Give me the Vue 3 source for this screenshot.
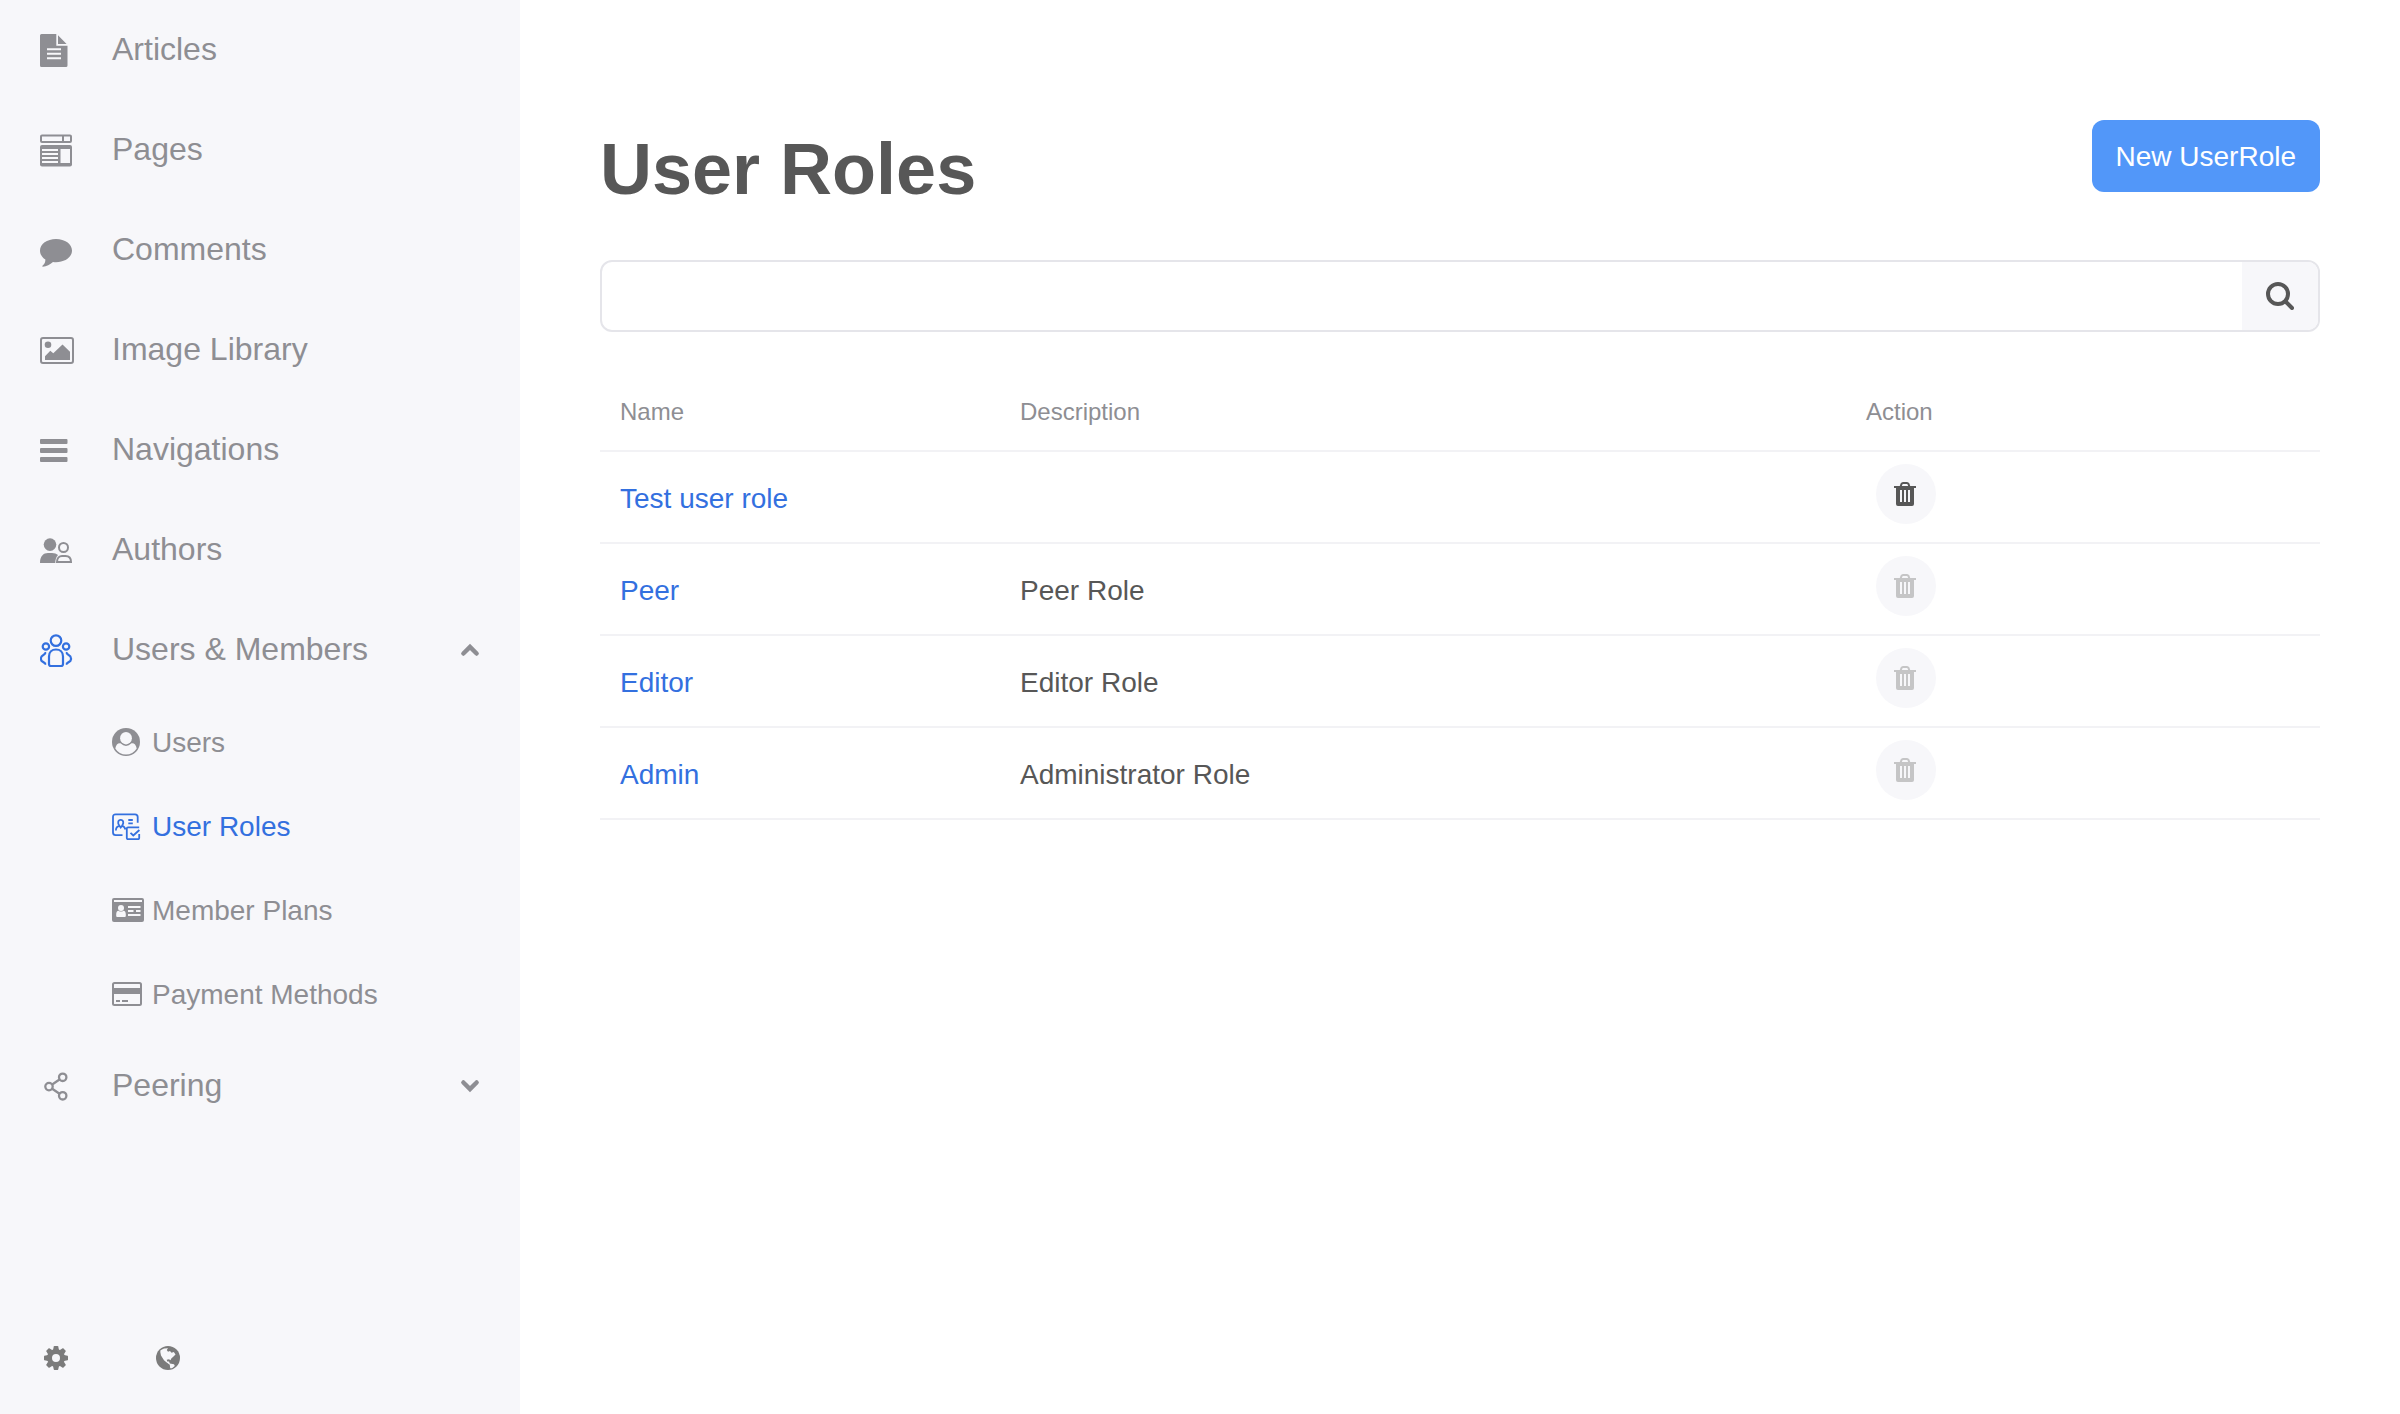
<script setup>
import { h, ref } from 'vue'

const bg = '#f7f7fa'

// Inner markup of every icon, drawn in its own pixel grid
const icons = {
  articles: {
    w: 36, h: 36,
    body: `<path fill="currentColor" d="M1.500 2H16.300V13.700H27.500V33.500Q27.500 35 26 35H1.500Q0 35 0 33.500V3.500Q0 2 1.500 2zM18 3.200L26.600 11.900H18z"/>
      <path stroke="${bg}" stroke-width="2" d="M7 17.300H21M7 21.800H21M7 26.300H21"/>`
  },
  pages: {
    w: 36, h: 36,
    body: `<rect x="1" y="3.500" width="30" height="6.500" rx="1" fill="none" stroke="currentColor" stroke-width="2"/>
      <path stroke="currentColor" stroke-width="2" d="M23 3V11"/>
      <rect y="13" width="32" height="21.500" rx="2" fill="currentColor"/>
      <path stroke="${bg}" stroke-width="2" d="M2 18H18M2 22H18M2 26H18M2 30H18"/>
      <path fill="${bg}" d="M20.500 17H30V31H20.500z"/>`
  },
  comments: {
    w: 36, h: 36,
    body: `<path fill="currentColor" d="M16 7C25 7 32 12 32 18.500S25 30.200 16 30.200C15 30.200 14 30.200 13 30C10 32.500 6.500 34.500 2.800 34.700C2 34.500 2.200 33.800 3 33.200C4.800 31.600 5.300 30 5.400 27.500C2 25.500 0 22.200 0 18.500C0 12 7 7 16 7z"/>`
  },
  images: {
    w: 36, h: 36,
    body: `<rect x="1" y="6" width="32" height="25" rx="2" fill="none" stroke="currentColor" stroke-width="2"/>
      <circle cx="8" cy="12.800" r="3.300" fill="currentColor"/>
      <path fill="currentColor" d="M5 28V24.200L10.300 18.700L13.300 21.300L22.500 12.500L30 19.700V28z"/>`
  },
  navigations: {
    w: 36, h: 36,
    body: `<path fill="currentColor" d="M1 7H26.500Q27.500 7 27.500 8V11Q27.500 12 26.500 12H1Q0 12 0 11V8Q0 7 1 7zM1 16H26.500Q27.500 16 27.500 17V20Q27.500 21 26.500 21H1Q0 21 0 20V17Q0 16 1 16zM1 25H26.500Q27.500 25 27.500 26V29Q27.500 30 26.500 30H1Q0 30 0 29V26Q0 25 1 25z"/>`
  },
  authors: {
    w: 36, h: 36,
    body: `<circle cx="10" cy="12.600" r="6.300" fill="currentColor"/>
      <path fill="currentColor" d="M0 31C0 24 3.500 21 8 21H12C14.500 21 16.500 21.700 18 23C16 25 15.300 28 15.300 31z"/>
      <circle cx="23.500" cy="15.500" r="4.500" fill="none" stroke="currentColor" stroke-width="2"/>
      <path fill="none" stroke="currentColor" stroke-width="2" d="M17 30.100C17 26 19.500 24 22 24H25.500C28.500 24 31 26 31 30.100z"/>`
  },
  members: {
    w: 36, h: 36,
    body: `<g fill="none" stroke="currentColor" stroke-width="2.200">
      <circle cx="16" cy="8.600" r="5.300"/><circle cx="5.900" cy="14.500" r="3.200"/><circle cx="26.100" cy="14.500" r="3.200"/>
      <path d="M9 32V24.500C9 20 12 17.500 16 17.500S23 20 23 24.500V32Q23 34 21 34H11Q9 34 9 32z"/>
      <path d="M6.200 20.800C5.200 20.800 4.800 21.300 4.500 22.200L1.600 24.500C.700 26 .700 27.500 1.600 29L4.300 30.800C4.600 31.500 5.200 31.800 6.200 31.800"/>
      <path d="M25.800 20.800C26.800 20.800 27.200 21.300 27.500 22.200L30.400 24.500C31.300 26 31.300 27.500 30.400 29L27.700 30.800C27.400 31.500 26.800 31.800 25.800 31.800"/></g>`
  },
  peering: {
    w: 36, h: 36,
    body: `<g fill="none" stroke="currentColor" stroke-width="2.300">
      <circle cx="22.700" cy="9.300" r="3.700"/><circle cx="9" cy="18.600" r="3.700"/><circle cx="22.700" cy="27.800" r="3.700"/>
      <path d="M12.200 16.500L19.500 11.500M12.200 20.700L19.500 25.700"/></g>`
  },
  user: {
    w: 32, h: 28,
    body: `<circle cx="14" cy="14" r="14" fill="currentColor"/>
      <path fill="${bg}" d="M3.300 20.500C4 16.500 6 14.800 8.500 15.300Q14 20.500 19.500 15.300C22 14.800 24 16.500 24.700 20.500A12.500 12.500 0 0 1 3.300 20.500z"/>
      <ellipse cx="14" cy="10.200" rx="5.900" ry="6.200" fill="${bg}"/>`
  },
  roles: {
    w: 32, h: 28,
    body: `<g fill="none" stroke="currentColor" stroke-width="1.800">
      <path d="M25.700 10.800V5Q25.700 2.300 23 2.300H3.700Q1 2.300 1 5V20.500Q1 23.200 3.700 23.200H10.500"/>
      <path d="M7.200 13.200C5.500 11.500 5.800 7.800 8.700 7.800S12 11.500 10.200 13.200"/>
      <path d="M3.900 18.500C3.900 15.500 5.500 14.200 7.400 13.800L8.700 15.600L10.100 13.800C12 14.300 13 15.700 13.400 17.500"/>
      <path d="M16.300 8H20.800M16.300 11.300H20.800"/>
      <path d="M27.200 15.300H16Q14.800 15.300 14.800 16.500V26Q14.800 27.200 16 27.200H26Q27.200 27.200 27.200 26V22"/>
      <path d="M18.500 20.800L21.300 23.500L27.400 18"/></g>`
  },
  plans: {
    w: 32, h: 24,
    body: `<rect width="32" height="24" rx="2" fill="currentColor"/>
      <path fill="${bg}" d="M2 2H30V4H2zM16 8H28.500V10H16zM16 12H21.500V14H16zM24 12H28.500V14H24zM16 16H28.500V18H16z"/>
      <circle cx="9" cy="10" r="3" fill="${bg}"/>
      <path fill="${bg}" d="M4.200 18V16.500C4.200 14 5 13 6.500 12.700Q9 14.500 11.500 12.700C13 13 13.800 14 13.800 16.500V18Q13.800 19 12.800 19H5.200Q4.200 19 4.200 18z"/>`
  },
  payment: {
    w: 32, h: 24,
    body: `<rect x="1" y="1" width="28" height="22" rx="1.500" fill="none" stroke="currentColor" stroke-width="2"/>
      <path fill="currentColor" d="M0 6H30V12H0zM4 18H8V20H4zM10 18H16V20H10z"/>`
  },
  chevron: {
    w: 20, h: 14,
    body: `<path fill="none" stroke="currentColor" stroke-width="4.500" stroke-linecap="round" d="M3.400 10.500L10 4L16.600 10.500"/>`
  },
  gear: {
    w: 24, h: 24,
    body: `<circle cx="12" cy="12" r="6.500" fill="none" stroke="currentColor" stroke-width="5"/>
      <g fill="currentColor">${[0, 45, 90, 135, 180, 225, 270, 315]
        .map((a) => `<path transform="rotate(${a} 12 12)" d="M9 4L9.800 .4Q9.900 0 10.300 0H13.700Q14.100 0 14.200 .4L15 4z"/>`)
        .join('')}</g>`
  },
  globe: {
    w: 24, h: 24,
    body: `<circle cx="12" cy="12" r="12" fill="currentColor"/>
      <path fill="${bg}" d="M4.500 4.300L8 2.500L12 2.300L10.800 4L12 5.800L14 5L15.500 6.800L17.800 6L19.500 8.600L17.500 10.500L15.300 12.500L14.500 14.200L13 13.200L10.700 13.800L11.300 15.600L13 15.600L13.800 17.500L18 18.200L18.800 20L16 22.300L14.200 22.300L13.800 18.800L11 16.800L8 14.200L5 9.500L4.300 6z"/>
      <path fill="currentColor" d="M11.500 4L13.200 2.600L17 4.300L16 5.300L13.800 4.600z"/>`
  },
  search: {
    w: 28, h: 28,
    body: `<circle cx="12" cy="12" r="10" fill="none" stroke="currentColor" stroke-width="4"/>
      <path stroke="currentColor" stroke-width="4" stroke-linecap="round" d="M19.500 19.500L26 26"/>`
  },
  trash: {
    w: 24, h: 24,
    body: `<path fill="none" stroke="currentColor" stroke-width="2" d="M6.500 5L7.500 2Q8 1 9 1H13Q14 1 14.500 2L15.500 5"/>
      <path fill="currentColor" fill-rule="evenodd" d="M0 4H22V6H20V22Q20 24 18 24H4Q2 24 2 22V6H0zM6 8V20H8V8zM10 8V20H12V8zM14 8V20H16V8z"/>`
  }
}

const Icon = (props) => {
  const icon = icons[props.name]
  return h('svg', {
    width: icon.w,
    height: icon.h,
    viewBox: `0 0 ${icon.w} ${icon.h}`,
    'aria-hidden': 'true',
    innerHTML: icon.body
  })
}
Icon.props = ['name']

const menu = [
  { label: 'Articles', icon: 'articles' },
  { label: 'Pages', icon: 'pages' },
  { label: 'Comments', icon: 'comments' },
  { label: 'Image Library', icon: 'images' },
  { label: 'Navigations', icon: 'navigations' },
  { label: 'Authors', icon: 'authors' }
]

const memberMenu = [
  { label: 'Users', icon: 'user' },
  { label: 'User Roles', icon: 'roles', active: true },
  { label: 'Member Plans', icon: 'plans' },
  { label: 'Payment Methods', icon: 'payment' }
]

const roles = [
  { name: 'Test user role', description: '', removable: true },
  { name: 'Peer', description: 'Peer Role', removable: false },
  { name: 'Editor', description: 'Editor Role', removable: false },
  { name: 'Admin', description: 'Administrator Role', removable: false }
]

const query = ref('')
const membersOpen = ref(true)
const peeringOpen = ref(false)
</script>

<template>
  <div class="layout">
    <aside class="sidebar">
      <nav>
        <ul class="menu">
          <li v-for="item in menu" :key="item.label">
            <a class="entry" href="#"><Icon :name="item.icon" /><span class="label">{{ item.label }}</span></a>
          </li>
          <li>
            <button class="entry" type="button" :aria-expanded="membersOpen" @click="membersOpen = !membersOpen">
              <Icon name="members" class="accent" /><span class="label">Users &amp; Members</span>
              <Icon name="chevron" :class="{ down: !membersOpen }" />
            </button>
            <ul v-if="membersOpen" class="menu">
              <li v-for="item in memberMenu" :key="item.label">
                <a class="subentry" :class="{ accent: item.active }" href="#">
                  <Icon :name="item.icon" /><span class="sublabel">{{ item.label }}</span>
                </a>
              </li>
            </ul>
          </li>
          <li>
            <button class="entry" type="button" :aria-expanded="peeringOpen" @click="peeringOpen = !peeringOpen">
              <Icon name="peering" /><span class="label">Peering</span>
              <Icon name="chevron" :class="{ down: !peeringOpen }" />
            </button>
          </li>
        </ul>
      </nav>
      <div class="tools">
        <button type="button" aria-label="Settings"><Icon name="gear" /></button>
        <button type="button" aria-label="Language"><Icon name="globe" /></button>
      </div>
    </aside>

    <main class="content">
      <header class="heading">
        <h1>User Roles</h1>
        <button class="create" type="button">New UserRole</button>
      </header>

      <form class="search" role="search" @submit.prevent>
        <input v-model="query" type="text" aria-label="Search user roles" />
        <button type="submit" aria-label="Search"><Icon name="search" /></button>
      </form>

      <table class="roles">
        <thead>
          <tr>
            <th class="col-name" scope="col">Name</th>
            <th scope="col">Description</th>
            <th class="col-action" scope="col">Action</th>
          </tr>
        </thead>
        <tbody>
          <tr v-for="role in roles" :key="role.name">
            <td><a href="#">{{ role.name }}</a></td>
            <td>{{ role.description }}</td>
            <td class="action">
              <button type="button" :disabled="!role.removable" :aria-label="`Delete ${role.name}`">
                <Icon name="trash" />
              </button>
            </td>
          </tr>
        </tbody>
      </table>
    </main>
  </div>
</template>

<style>
body {
  margin: 0;
  background: #fff;
}
</style>

<style scoped>
.layout {
  display: flex;
  min-height: 100vh;
  font-family: "Liberation Sans", Arial, sans-serif;
  font-size: 28px;
  line-height: 40px;
  color: #575757;
}

svg {
  display: block;
  flex: none;
}

button,
input {
  border: 0;
  padding: 0;
  font: inherit;
  color: inherit;
  background: none;
}

button {
  cursor: pointer;
}

a {
  color: #3370df;
  text-decoration: none;
}

.sidebar {
  flex: none;
  display: flex;
  flex-direction: column;
  justify-content: space-between;
  width: 520px;
  background: #f7f7fa;
  color: #8e8e93;
}

.menu {
  margin: 0;
  padding: 0;
  list-style: none;
}

.entry {
  box-sizing: border-box;
  display: flex;
  align-items: center;
  gap: 36px;
  width: 100%;
  height: 100px;
  padding: 0 40px;
  font-size: 32px;
  text-align: left;
  color: #8e8e93;
}

.label {
  flex: 1;
  padding-bottom: 2px;
}

.subentry {
  display: flex;
  align-items: center;
  gap: 8px;
  height: 84px;
  padding-left: 112px;
  color: #8e8e93;
}

.sublabel {
  padding-top: 2px;
}

.accent {
  color: #3370df;
}

.down {
  transform: rotate(180deg);
}

.tools {
  display: flex;
  color: #7b7b7b;
}

.tools button {
  display: flex;
  align-items: center;
  justify-content: center;
  width: 112px;
  height: 112px;
}

.content {
  flex: 1;
  min-width: 0;
  padding: 120px 80px 80px;
}

.heading {
  display: flex;
  justify-content: space-between;
  align-items: flex-start;
}

h1 {
  margin: 0;
  padding-top: 8px;
  font-size: 72px;
  line-height: 82px;
}

.create {
  height: 72px;
  padding: 2px 24px 0;
  border-radius: 12px;
  background: #5297f9;
  color: #fff;
}

.search {
  display: flex;
  height: 68px;
  margin-top: 50px;
  border: 2px solid #e5e5ea;
  border-radius: 12px;
  overflow: hidden;
}

.search input {
  flex: 1;
  min-width: 0;
  padding: 0 22px;
  outline: 0;
}

.search button {
  display: flex;
  align-items: center;
  justify-content: center;
  width: 76px;
  background: #f7f7fa;
}

.roles {
  width: 100%;
  margin-top: 40px;
  border-collapse: separate;
  border-spacing: 0;
  table-layout: fixed;
}

.roles th {
  padding: 20px 20px 18px;
  border-bottom: 2px solid #f2f2f5;
  font-size: 24px;
  font-weight: 400;
  text-align: left;
  color: #8e8e93;
}

.roles td {
  padding: 27px 20px 23px;
  border-bottom: 2px solid #f2f2f5;
  vertical-align: top;
}

.col-name {
  width: 360px;
}

.col-action {
  width: 434px;
}

.roles .action {
  padding: 12px 30px 18px;
}

.action button {
  display: flex;
  align-items: center;
  justify-content: center;
  width: 60px;
  height: 60px;
  border-radius: 50%;
  background: #f7f7fa;
}

.action button:disabled {
  cursor: default;
  color: #c5c5c6;
}
</style>
